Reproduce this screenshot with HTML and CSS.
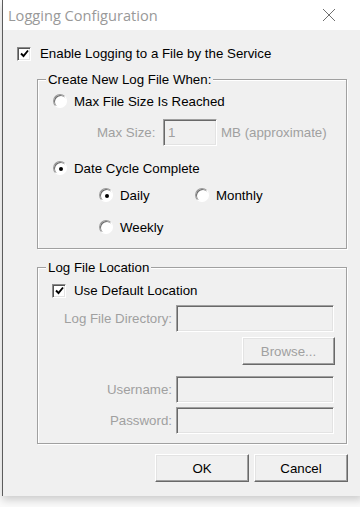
FILE: index.html
```html
<!DOCTYPE html>
<html>
<head>
<meta charset="utf-8">
<link rel="stylesheet" href="styles.css">
</head>
<body>
<div class="screen">
  <div class="window">
    <div class="titlebar">
      <span class="title">Logging Configuration</span>
      <svg class="close" width="14" height="14" viewBox="0 0 14 14"><path d="M1 1L13 13M13 1L1 13" stroke="#6f6f6f" stroke-width="1" fill="none"/></svg>
    </div>
    <div class="body">
      <div class="row top-check">
        <span class="check"><svg width="9" height="9" viewBox="0 0 9 9"><path d="M1 4.5L3.5 7L8 1.5" stroke="#000" stroke-width="1.9" fill="none"/></svg></span>
        <span class="lbl">Enable Logging to a File by the Service</span>
      </div>

      <div class="group g1">
        <span class="legend">Create New Log File When:</span>
        <div class="row r-max">
          <span class="radio"></span>
          <span class="lbl">Max File Size Is Reached</span>
        </div>
        <div class="row r-size">
          <span class="dis size-lbl">Max Size:</span>
          <span class="field size-field"><span class="dis">1</span></span>
          <span class="dis mb">MB (approximate)</span>
        </div>
        <div class="row r-date">
          <span class="radio on"></span>
          <span class="lbl">Date Cycle Complete</span>
        </div>
        <div class="row r-daily">
          <span class="opt daily"><span class="radio on"></span><span class="lbl">Daily</span></span>
          <span class="opt monthly"><span class="radio"></span><span class="lbl">Monthly</span></span>
        </div>
        <div class="row r-weekly">
          <span class="opt daily"><span class="radio"></span><span class="lbl">Weekly</span></span>
        </div>
      </div>

      <div class="group g2">
        <span class="legend">Log File Location</span>
        <div class="row r-default">
          <span class="check"><svg width="9" height="9" viewBox="0 0 9 9"><path d="M1 4.5L3.5 7L8 1.5" stroke="#000" stroke-width="1.9" fill="none"/></svg></span>
          <span class="lbl">Use Default Location</span>
        </div>
        <div class="row r-field r-dir">
          <span class="dis flabel">Log File Directory:</span>
          <span class="field wide"></span>
        </div>
        <div class="row r-browse">
          <span class="btn dis-btn">Browse...</span>
        </div>
        <div class="row r-field r-user">
          <span class="dis flabel">Username:</span>
          <span class="field wide"></span>
        </div>
        <div class="row r-field r-pass">
          <span class="dis flabel">Password:</span>
          <span class="field wide"></span>
        </div>
      </div>

      <div class="row buttons">
        <span class="btn">OK</span>
        <span class="btn">Cancel</span>
      </div>
    </div>
  </div>
</div>
</body>
</html>
```

FILE: styles.css
```css
* { box-sizing: border-box; }
html, body { margin: 0; padding: 0; }
body {
  width: 360px;
  height: 507px;
  overflow: hidden;
  background: #ffffff;
  font-family: "Liberation Sans", Arial, sans-serif;
  font-size: 13.3px;
  color: #000;
}
.screen {
  width: 360px;
  height: 507px;
  padding-left: 2px;
  background: #fafafa;
}
.window {
  width: 361px;
  height: 496px;
  border-left: 1px solid #5c5c5c;
  background: #f0f0f0;
  box-shadow: 0 4px 8px rgba(0,0,0,0.18);
  display: flex;
  flex-direction: column;
}
.titlebar {
  height: 30px;
  background: #ffffff;
  display: flex;
  align-items: center;
  padding-left: 5px;
  flex: none;
}
.title {
  font-family: "Open Sans", "Noto Sans", sans-serif;
  font-size: 14.6px;
  color: #999999;
  flex: 1;
}
.close { margin-right: 27px; margin-top: 0; }
.body {
  flex: 1;
  display: flex;
  flex-direction: column;
  padding-top: 14px;
}
.row { display: flex; align-items: center; }
.lbl { white-space: nowrap; }
.dis { color: #a0a0a0; white-space: nowrap; }

.check {
  width: 14px; height: 14px;
  background: #fff;
  border: 1px solid;
  border-color: #8a8a8a #ffffff #ffffff #8a8a8a;
  box-shadow: inset 1px 1px 0 #555, inset -1px -1px 0 #e3e3e3;
  display: flex; align-items: center; justify-content: center;
  flex: none;
}
.radio {
  width: 14px; height: 14px;
  border-radius: 50%;
  background: #fff;
  border: 1px solid;
  border-color: #9a9a9a #ffffff #ffffff #9a9a9a;
  box-shadow: inset 1px 1px 0 #6a6a6a;
  display: flex; align-items: center; justify-content: center;
  flex: none;
}
.radio.on::after {
  content: "";
  width: 4px; height: 4px;
  border-radius: 50%;
  background: #000;
  margin: 1px 0 0 1px;
}

.top-check { height: 19px; padding-left: 14px; }
.top-check .lbl { margin-left: 9px; }

.group {
  margin-left: 34px;
  width: 310px;
  border: 1px solid #a0a0a0;
  box-shadow: inset 1px 1px 0 #fff, 1px 1px 0 #fff;
  display: flex;
  flex-direction: column;
}
.legend {
  align-self: flex-start;
  margin-top: -8px;
  margin-left: 8px;
  padding: 0 2px;
  height: 16px;
  line-height: 16px;
  background: #f0f0f0;
  white-space: nowrap;
}
.g1 { margin-top: 16px; padding-bottom: 12px; }
.r-max { height: 18px; margin-top: 4px; padding-left: 15px; }
.r-max .lbl, .r-date .lbl { margin-left: 7px; }
.r-size { height: 27px; margin-top: 9px; padding-left: 59px; }
.size-lbl { width: 66px; }
.field {
  height: 27px;
  background: #f0f0f0;
  border: 1px solid;
  border-color: #a0a0a0 #ffffff #ffffff #a0a0a0;
  box-shadow: inset 1px 1px 0 #696969, inset -1px -1px 0 #e3e3e3;
  display: flex; align-items: center;
  padding-left: 4px;
}
.size-field { width: 54px; }
.mb { margin-left: 4px; }
.r-date { height: 18px; margin-top: 13px; padding-left: 15px; }
.r-daily { height: 18px; margin-top: 9px; padding-left: 61px; }
.r-weekly { height: 18px; margin-top: 14px; padding-left: 61px; }
.opt { display: flex; align-items: center; }
.opt .lbl { margin-left: 7px; }
.daily { width: 96px; }

.g2 { margin-top: 18px; padding-bottom: 9px; }
.r-default { height: 19px; margin-top: 5px; padding-left: 14px; }
.r-default .lbl { margin-left: 8px; }
.r-field { height: 27px; }
.flabel { width: 138px; text-align: right; padding-right: 4px; }
.wide { width: 158px; }
.r-dir { margin-top: 5px; }
.r-browse { margin-top: 5px; padding-left: 204px; }
.r-user { margin-top: 11px; }
.r-pass { margin-top: 4px; }

.btn {
  width: 94px;
  height: 28px;
  background: #f0f0f0;
  border: 1px solid;
  border-color: #ffffff #696969 #696969 #ffffff;
  box-shadow: inset -1px -1px 0 #a0a0a0, inset 1px 1px 0 #e3e3e3;
  display: flex; align-items: center; justify-content: center;
  white-space: nowrap;
}
.dis-btn { color: #a0a0a0; width: 93px; }
.buttons { margin-top: 10px; padding-left: 152px; gap: 5px; }
```
